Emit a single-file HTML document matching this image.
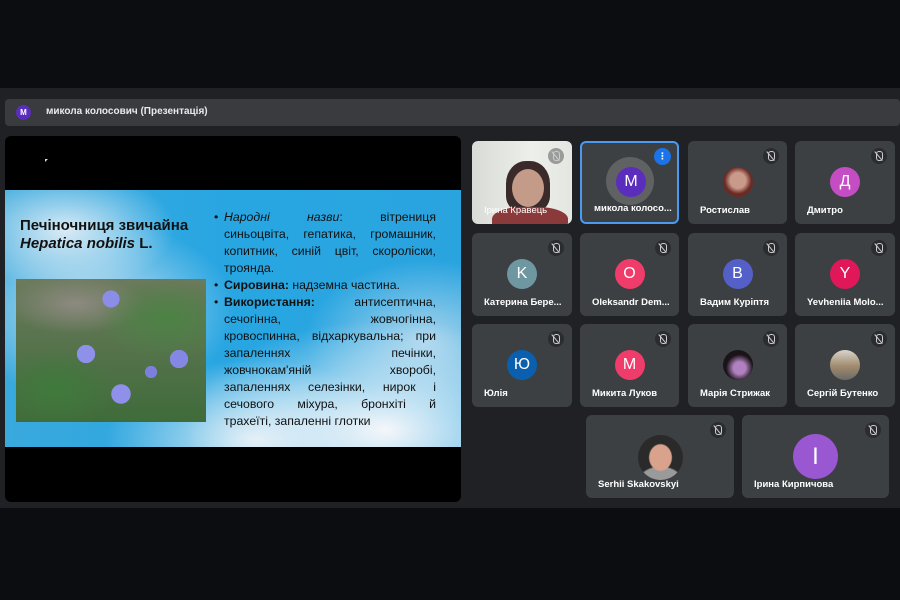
<!DOCTYPE html>
<html><head><meta charset="utf-8"><style>
*{margin:0;padding:0;box-sizing:border-box}
body{width:900px;height:600px;background:#0c0d11;position:relative;overflow:hidden;font-family:"Liberation Sans","DejaVu Sans",sans-serif}
.panel{position:absolute;left:0;top:88px;width:900px;height:420px;background:#202124}
.bar{position:absolute;left:5px;top:99px;width:895px;height:27px;background:#3a3b3f;border-radius:4px}
.bar .av{position:absolute;left:11px;top:6px;width:15px;height:15px;border-radius:50%;background:#5b2dbd;color:#fff;font-size:8px;font-weight:bold;text-align:center;line-height:15px}
.bar .t{position:absolute;left:41px;top:7px;color:#e8eaed;font-size:10px;font-weight:bold}
.stage{position:absolute;left:5px;top:136px;width:456px;height:366px;background:#000;border-radius:6px;overflow:hidden}
.slide{position:absolute;left:0;top:54px;width:456px;height:257px;overflow:hidden;
background:
radial-gradient(ellipse 110px 60px at 60px 40px,rgba(235,242,248,.9),rgba(235,242,248,0)),
radial-gradient(ellipse 140px 90px at 90px 120px,rgba(225,236,245,.85),rgba(225,236,245,0)),
radial-gradient(ellipse 200px 110px at 380px 240px,rgba(245,247,250,1),rgba(245,247,250,0)),
radial-gradient(ellipse 150px 80px at 250px 250px,rgba(240,244,248,.9),rgba(240,244,248,0)),
radial-gradient(ellipse 120px 80px at 420px 150px,rgba(220,232,242,.7),rgba(220,232,242,0)),
linear-gradient(90deg,#3aa9dd,#28a6e2 50%,#2aa4df);}
.title{position:absolute;left:15px;top:27px;font-size:15px;font-weight:bold;color:#111;line-height:18px}
.photo{position:absolute;left:11px;top:89px;width:190px;height:143px;
background:
radial-gradient(circle 14px at 95px 20px,#8b8ee8 60%,transparent 62%),
radial-gradient(circle 15px at 70px 75px,#8f90ea 60%,transparent 62%),
radial-gradient(circle 15px at 163px 80px,#8487e4 60%,transparent 62%),
radial-gradient(circle 16px at 105px 115px,#8e90ea 60%,transparent 62%),
radial-gradient(circle 10px at 135px 93px,#7c80dc 60%,transparent 62%),
radial-gradient(ellipse 60px 40px at 40px 110px,#3f7a3c,transparent),
radial-gradient(ellipse 70px 40px at 150px 40px,#4c8344,transparent),
radial-gradient(ellipse 70px 30px at 60px 25px,#8d8a80,transparent),
linear-gradient(#6b7a5c,#3f6b3a);}
.txt{position:absolute;left:209px;top:19px;width:222px;font-size:12.3px;line-height:17px;color:#111}
.txt .l{text-align:justify;text-align-last:justify;padding-left:10px;white-space:nowrap;display:flex;justify-content:space-between}
.txt .n{text-align:left;padding-left:10px}
.txt .b{position:relative}
.txt .b:before{content:"•";position:absolute;left:0}
.tile{position:absolute;background:#3c4043;border-radius:6px;overflow:hidden}
.tile .nm{position:absolute;left:12px;bottom:8px;color:#fff;font-size:9.5px;font-weight:bold;white-space:nowrap}
.tile .av{position:absolute;left:50%;top:50%;width:30px;height:30px;margin:-16px 0 0 -15px;border-radius:50%;color:#fff;font-size:16px;text-align:center;line-height:30px}
.mic{position:absolute;right:8px;top:7px;width:16px;height:16px;border-radius:50%;background:#2b2c30}
.mic:after{content:"";position:absolute;left:5px;top:3px;width:5px;height:8px;border:1.3px solid #ccc;border-radius:3px}
.mic:before{content:"";position:absolute;left:7px;top:2px;width:1.3px;height:12px;background:#ccc;transform:rotate(-40deg);z-index:1}
</style></head><body>
<div class="panel"></div>
<div class="bar"><div class="av">M</div><div class="t">микола колосович (Презентація)</div></div>
<div class="stage">
<div style="position:absolute;left:40px;top:23px;width:0;height:0;border-left:3px solid #ddd;border-bottom:3px solid transparent"></div>
<div class="slide">
<div class="title">Печіночниця звичайна<br><i>Hepatica nobilis</i> L.</div>
<div class="photo"></div>
<div class="txt">
<div class="l b"><i>Народні</i><i>назви<span style="font-style:normal">:</span></i><span>вітрениця</span></div>
<div class="l"><span>синьоцвіта,</span><span>гепатика,</span><span>громашник,</span></div>
<div class="l"><span>копитник,</span><span>синій</span><span>цвіт,</span><span>скоролiски,</span></div>
<div class="n">троянда.</div>
<div class="n b"><b>Сировина:</b> надземна частина.</div>
<div class="l b"><b>Використання:</b><span>антисептична,</span></div>
<div class="l"><span>сечогінна,</span><span>жовчогінна,</span></div>
<div class="l"><span>кровоспинна,</span><span>відхаркувальна;</span><span>при</span></div>
<div class="l"><span>запаленнях</span><span>печінки,</span></div>
<div class="l"><span>жовчнокам'яній</span><span>хворобі,</span></div>
<div class="l"><span>запаленнях</span><span>селезінки,</span><span>нирок</span><span>і</span></div>
<div class="l"><span>сечового</span><span>міхура,</span><span>бронхіті</span><span>й</span></div>
<div class="n">трахеїті, запаленні глотки</div>
</div>
</div>
</div>

<div class="tile" style="left:472px;top:141px;width:100px;height:83px;background:linear-gradient(90deg,#d9dcd6,#ecefea 60%,#e4e6e2)">
<div style="position:absolute;left:34px;top:20px;width:44px;height:50px;border-radius:45% 45% 30% 30%;background:#3a2a2a"></div>
<div style="position:absolute;left:40px;top:28px;width:32px;height:38px;border-radius:50%;background:#c49a88"></div>
<div style="position:absolute;left:20px;top:66px;width:76px;height:30px;border-radius:40% 40% 0 0;background:#8a3a3a"></div>
<div class="mic" style="background:#9a9c9a"></div><div class="nm" style="font-weight:normal">Ірина Кравець</div></div>

<div class="tile" style="left:580px;top:141px;width:99px;height:83px;border:2px solid #4b9af0">
<div style="position:absolute;left:24px;top:14px;width:48px;height:48px;border-radius:50%;background:#5f6163"></div>
<div class="av" style="background:#5b2dbd;top:40px;left:49px">M</div>
<div style="position:absolute;right:6px;top:5px;width:17px;height:17px;border-radius:50%;background:#1a73e8;color:#fff;font-size:9px;text-align:center;line-height:17px;font-weight:bold">⋮</div>
<div class="nm">микола колосо...</div></div>

<div class="tile" style="left:688px;top:141px;width:99px;height:83px"><div class="mic"></div><div class="av" style="background:radial-gradient(circle at 50% 45%,#c9998a 35%,#6b2a24 60%)"></div><div class="nm">Ростислав</div></div>
<div class="tile" style="left:795px;top:141px;width:100px;height:83px"><div class="mic"></div><div class="av" style="background:#c44dc4">Д</div><div class="nm">Дмитро</div></div>

<div class="tile" style="left:472px;top:233px;width:100px;height:83px"><div class="mic"></div><div class="av" style="background:#6e97a2">K</div><div class="nm">Катерина Бере...</div></div>
<div class="tile" style="left:580px;top:233px;width:99px;height:83px"><div class="mic"></div><div class="av" style="background:#f03c6a">O</div><div class="nm">Oleksandr Dem...</div></div>
<div class="tile" style="left:688px;top:233px;width:99px;height:83px"><div class="mic"></div><div class="av" style="background:#5460c8">B</div><div class="nm">Вадим Куріптя</div></div>
<div class="tile" style="left:795px;top:233px;width:100px;height:83px"><div class="mic"></div><div class="av" style="background:#e0185a">Y</div><div class="nm">Yevheniia Molo...</div></div>

<div class="tile" style="left:472px;top:324px;width:100px;height:83px"><div class="mic"></div><div class="av" style="background:#0a5fae">Ю</div><div class="nm">Юлія</div></div>
<div class="tile" style="left:580px;top:324px;width:99px;height:83px"><div class="mic"></div><div class="av" style="background:#f03c6a">M</div><div class="nm">Микита Луков</div></div>
<div class="tile" style="left:688px;top:324px;width:99px;height:83px"><div class="mic"></div><div class="av" style="background:radial-gradient(circle at 55% 60%,#b080c0 25%,#1a1418 55%)"></div><div class="nm">Марія Стрижак</div></div>
<div class="tile" style="left:795px;top:324px;width:100px;height:83px"><div class="mic"></div><div class="av" style="background:linear-gradient(#d8d4cc,#a08a6c 55%,#6b6a68)"></div><div class="nm">Сергій Бутенко</div></div>

<div class="tile" style="left:586px;top:415px;width:148px;height:83px"><div class="mic"></div>
<div style="position:absolute;left:52px;top:20px;width:45px;height:45px;border-radius:50%;background:radial-gradient(ellipse 12px 14px at 50% 50%,#d9a28c 90%,transparent 100%),radial-gradient(ellipse 22px 14px at 50% 100%,#9a9a9a 90%,transparent 100%),#2a2a2a"></div>
<div class="nm">Serhii Skakovskyi</div></div>
<div class="tile" style="left:742px;top:415px;width:147px;height:83px"><div class="mic"></div>
<div style="position:absolute;left:51px;top:19px;width:45px;height:45px;border-radius:50%;background:#9a57d2;color:#fff;font-size:24px;text-align:center;line-height:45px">I</div>
<div class="nm">Ірина Кирпичова</div></div>
</body></html>
